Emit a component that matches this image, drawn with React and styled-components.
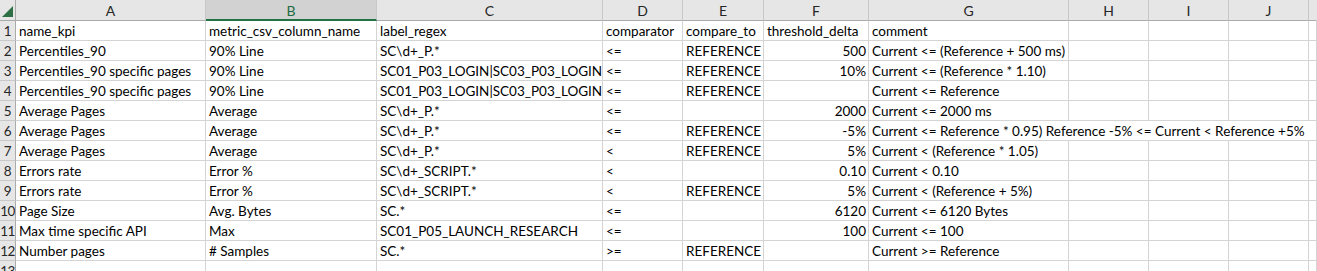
import React from 'react';
import styled, { createGlobalStyle } from 'styled-components';

const GlobalStyle = createGlobalStyle`
	html, body {
		margin: 0;
		padding: 0;
		background: #ffffff;
	}
`;

const COLS = [
	{ key: 'A', width: 190 },
	{ key: 'B', width: 171 },
	{ key: 'C', width: 226 },
	{ key: 'D', width: 80 },
	{ key: 'E', width: 81 },
	{ key: 'F', width: 105 },
	{ key: 'G', width: 200 },
	{ key: 'H', width: 80 },
	{ key: 'I', width: 80 },
	{ key: 'J', width: 80 },
	{ key: '', width: 0 }
];

const ROWS = [
	['name_kpi', 'metric_csv_column_name', 'label_regex', 'comparator', 'compare_to', 'threshold_delta', 'comment'],
	['Percentiles_90', '90% Line', 'SC\\d+_P.*', '<=', 'REFERENCE', '500', 'Current <= (Reference + 500 ms)'],
	['Percentiles_90 specific pages', '90% Line', 'SC01_P03_LOGIN|SC03_P03_LOGIN', '<=', 'REFERENCE', '10%', 'Current <= (Reference * 1.10)'],
	['Percentiles_90 specific pages', '90% Line', 'SC01_P03_LOGIN|SC03_P03_LOGIN', '<=', 'REFERENCE', '', 'Current <= Reference'],
	['Average Pages', 'Average', 'SC\\d+_P.*', '<=', '', '2000', 'Current <= 2000 ms'],
	['Average Pages', 'Average', 'SC\\d+_P.*', '<=', 'REFERENCE', '-5%', 'Current <= Reference * 0.95) Reference -5% <= Current < Reference +5%'],
	['Average Pages', 'Average', 'SC\\d+_P.*', '<', 'REFERENCE', '5%', 'Current < (Reference * 1.05)'],
	['Errors rate', 'Error %', 'SC\\d+_SCRIPT.*', '<', '', '0.10', 'Current < 0.10'],
	['Errors rate', 'Error %', 'SC\\d+_SCRIPT.*', '<', 'REFERENCE', '5%', 'Current < (Reference + 5%)'],
	['Page Size', 'Avg. Bytes', 'SC.*', '<=', '', '6120', 'Current <= 6120 Bytes'],
	['Max time specific API', 'Max', 'SC01_P05_LAUNCH_RESEARCH', '<=', '', '100', 'Current <= 100'],
	['Number pages', '# Samples', 'SC.*', '>=', 'REFERENCE', '', 'Current >= Reference'],
	[]
];

const Sheet = styled.div`
	display: grid;
	grid-template-columns: 16px ${COLS.map((c) => (c.width ? `${c.width}px` : '1fr')).join(' ')};
	grid-auto-rows: 20px;
	grid-template-rows: 21px;
	width: 1317px;
	height: 271px;
	overflow: hidden;
	font-family: Lato, "Liberation Sans", sans-serif;
	font-size: 13.5px;
	color: #000;
`;

const Corner = styled.div`
	position: relative;
	background: #e6e6e6;
	border-right: 1px solid #ababab;
	border-bottom: 1px solid #ababab;

	svg {
		position: absolute;
		right: 2px;
		bottom: 3px;
	}
`;

const ColHead = styled.div`
	display: flex;
	align-items: center;
	justify-content: center;
	background: ${(p) => (p.$active ? '#d2d2d2' : '#e6e6e6')};
	color: ${(p) => (p.$active ? '#1e6b41' : '#262626')};
	border-right: 1px solid ${(p) => (p.$last ? 'transparent' : '#c8c8c8')};
	border-bottom: ${(p) => (p.$active ? '2px solid #217346' : '1px solid #ababab')};
	box-sizing: border-box;
	font-size: 14px;
	padding-top: 1px;
`;

const RowHead = styled.div`
	display: flex;
	align-items: center;
	justify-content: center;
	background: #e6e6e6;
	color: #262626;
	border-right: 1px solid #ababab;
	border-bottom: 1px solid #c8c8c8;
	overflow: hidden;
	white-space: nowrap;
	font-size: 13.5px;
	letter-spacing: -0.5px;
`;

const Cell = styled.div`
	border-right: 1px solid #d4d4d4;
	border-bottom: 1px solid #d4d4d4;
	padding: 0 2px 0 3px;
	line-height: 20px;
	white-space: nowrap;
	overflow: hidden;
	text-align: ${(p) => (p.$right ? 'right' : 'left')};
	grid-column: ${(p) => (p.$span ? `span ${p.$span}` : 'auto')};
`;

export default function App() {
	return (
		<>
			<GlobalStyle />
			<Sheet>
				<Corner>
					<svg width="11" height="11" viewBox="0 0 11 11">
						<polygon points="11,0 11,11 0,11" fill="#2f6f45" />
					</svg>
				</Corner>
				{COLS.map((c, i) => (
					<ColHead key={i} $active={c.key === 'B'} $last={!c.key}>{c.key}</ColHead>
				))}
				{ROWS.map((row, r) => {
					const cells = [];
					for (let i = 0; i < COLS.length; i++) {
						const val = row[i] || '';
						// long comment spills over the empty cells to its right
						if (i === 6 && val.length > 40) {
							cells.push(<Cell key={i} $span={COLS.length - 6}>{val}</Cell>);
							break;
						}
						cells.push(
							<Cell key={i} $right={i === 5 && r > 0}>{val}</Cell>
						);
					}
					return (
						<React.Fragment key={r}>
							<RowHead>{r + 1}</RowHead>
							{cells}
						</React.Fragment>
					);
				})}
			</Sheet>
		</>
	);
}
